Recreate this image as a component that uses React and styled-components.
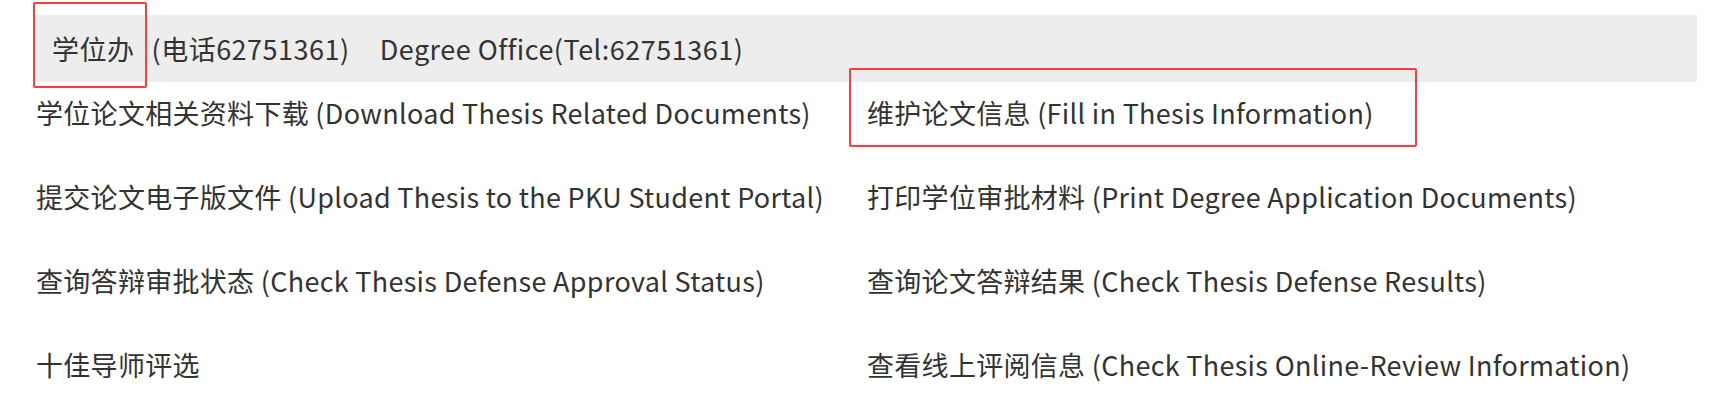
import styled, { createGlobalStyle } from 'styled-components';

const GlobalStyle = createGlobalStyle`
  body {
    margin: 0;
    background: #fff;
    font-family: "Noto Sans CJK SC", "Noto Sans", sans-serif;
    color: #333;
  }
`;

const Page = styled.div`
  padding: 15px 32px 0 34px;
`;

const Header = styled.div`
  display: flex;
  align-items: center;
  height: 67px;
  padding-left: 18px;
  background: #ededed;
  font-size: 27px;
  letter-spacing: 0.5px;
  white-space: pre;
`;

const Marked = styled.span`
  position: relative;
  &::after {
    content: '';
    position: absolute;
    left: ${(p) => p.$left}px;
    top: ${(p) => p.$top}px;
    width: ${(p) => p.$width}px;
    height: ${(p) => p.$height}px;
    border: 2px solid #ff3b3b;
    border-radius: 2px;
    box-sizing: border-box;
    pointer-events: none;
  }
`;

const Phone = styled.span`
  margin-left: 17px;
`;

const English = styled.span`
  margin-left: 30px;
`;

const Links = styled.div`
  display: grid;
  grid-template-columns: 831px 1fr;
  row-gap: 44px;
  padding: 11px 0 0 2px;
`;

const Item = styled.a`
  font-size: 27px;
  letter-spacing: 0.3px;
  line-height: 40px;
  color: #333;
  text-decoration: none;
  white-space: nowrap;
  justify-self: start;
`;

const items = [
  ['学位论文相关资料下载 (Download Thesis Related Documents)'],
  ['维护论文信息 (Fill in Thesis Information)', true],
  ['提交论文电子版文件 (Upload Thesis to the PKU Student Portal)'],
  ['打印学位审批材料 (Print Degree Application Documents)'],
  ['查询答辩审批状态 (Check Thesis Defense Approval Status)'],
  ['查询论文答辩结果 (Check Thesis Defense Results)'],
  ['十佳导师评选'],
  ['查看线上评阅信息 (Check Thesis Online-Review Information)'],
];

export default function App() {
  return (
    <>
      <GlobalStyle />
      <Page>
        <Header>
          <Marked $left={-19} $top={-27} $width={114} $height={86}>学位办</Marked>
          <Phone>(电话62751361)</Phone>
          <English>Degree Office(Tel:62751361)</English>
        </Header>
        <Links>
          {items.map(([text, marked]) => (
            <Item href="#" key={text}>
              {marked ? (
                <Marked $left={-18} $top={-25} $width={568} $height={79}>{text}</Marked>
              ) : (
                text
              )}
            </Item>
          ))}
        </Links>
      </Page>
    </>
  );
}
